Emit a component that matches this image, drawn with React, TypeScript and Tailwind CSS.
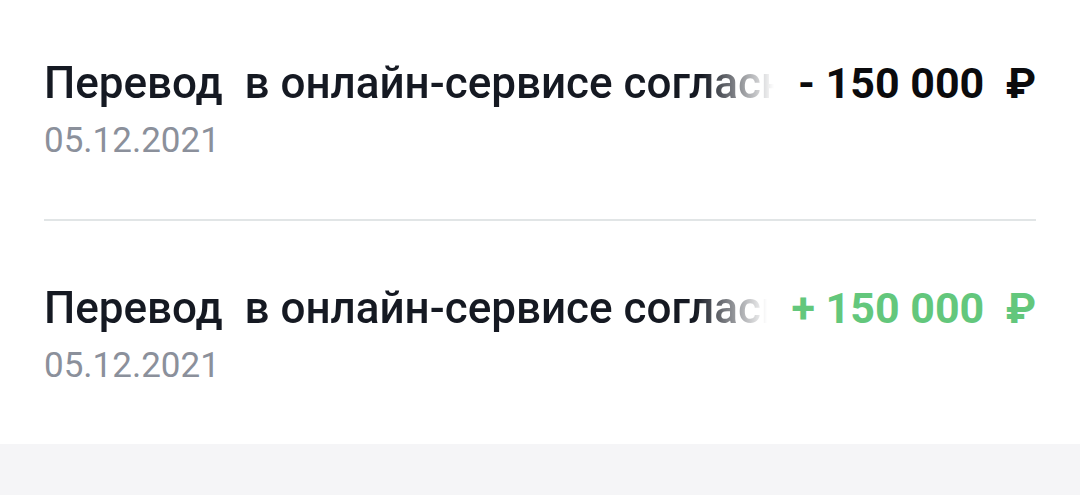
import React from "react";

interface Operation {
  title: string;
  date: string;
  amount: string;
  income: boolean;
}

const operations: Operation[] = [
  {
    title: "Перевод\u00a0 в онлайн-сервисе согласно заявлению",
    date: "05.12.2021",
    amount: "- 150 000\u00a0 ₽",
    income: false,
  },
  {
    title: "Перевод\u00a0 в онлайн-сервисе согласно заявлению",
    date: "05.12.2021",
    amount: "+ 150 000\u00a0 ₽",
    income: true,
  },
];

const OperationRow = ({ op, first }: { op: Operation; first: boolean }) => {
  return (
    <div className={`flex items-start gap-[24px] ${first ? "pt-[57px]" : "pt-[61px]"} pb-[58px]`}>
      <div className="flex-1 min-w-0">
        <p className="whitespace-nowrap overflow-hidden text-[44px] leading-[52px] font-medium text-[#151922] [mask-image:linear-gradient(to_right,black_calc(100%-72px),transparent)]">
          {op.title}
        </p>
        <p className="mt-[12px] text-[35px] leading-[40px] text-[#8b909b]">
          {op.date}
        </p>
      </div>
      <p
        className={`whitespace-nowrap text-[43px] leading-[52px] font-bold ${
          op.income ? "text-[#63c77c]" : "text-[#0b0b0d]"
        }`}
      >
        {op.amount}
      </p>
    </div>
  );
};

export default function App() {
  return (
    <div className="w-[1080px] h-[495px] bg-[#f5f5f7] font-['Roboto',sans-serif]">
      <div className="bg-white px-[44px]">
        {operations.map((op, i) => (
          <React.Fragment key={i}>
            {i > 0 && <div className="h-[2px] bg-[#e1e5e6]" />}
            <OperationRow op={op} first={i === 0} />
          </React.Fragment>
        ))}
      </div>
    </div>
  );
}
